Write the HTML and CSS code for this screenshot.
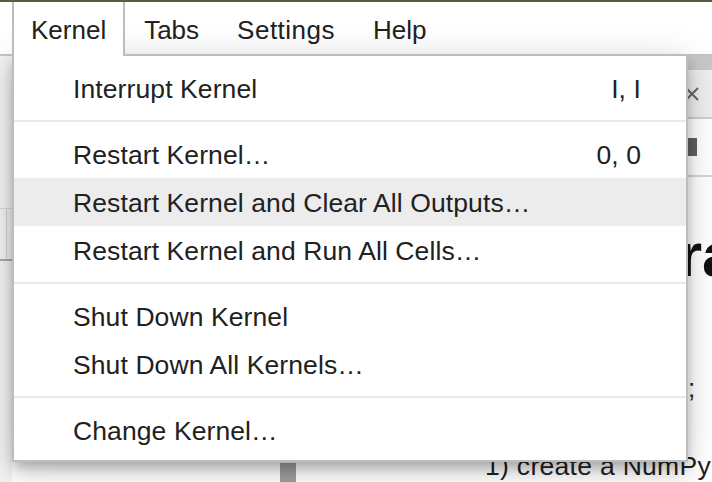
FILE: index.html
```html
<!DOCTYPE html>
<html lang="en">
<head>
<meta charset="utf-8">
<title>Kernel menu</title>
<link rel="stylesheet" href="styles.css">
</head>
<body>
<div class="app">
  <div class="topbar"></div>
  <nav class="menubar">
    <div class="mb-item active">Kernel</div>
    <div class="mb-item">Tabs</div>
    <div class="mb-item wide">Settings</div>
    <div class="mb-item">Help</div>
  </nav>
  <div class="workspace">
    <aside class="left-strip">
      <div class="left-box"><div class="left-box-col"></div></div>
    </aside>
    <main class="main">
      <div class="dock-bar"></div>
      <div class="doc-tab">
        <svg class="close" width="16" height="16" viewBox="0 0 16 16"><path d="M2 2 L14 14 M14 2 L2 14" stroke="#666" stroke-width="2" fill="none"/></svg>
      </div>
      <div class="toolbar"><span class="stop"></span></div>
      <div class="notebook">
        <h1 class="title">Arrays</h1>
        <p class="lead">the following steps;</p>
        <div class="row">
          <span class="collapser"></span>
          <span class="step">1) create a NumPy</span>
        </div>
      </div>
    </main>
  </div>
</div>

<div class="menu">
  <div class="mi"><span>Interrupt Kernel</span><span class="key">I, I</span></div>
  <div class="sep"></div>
  <div class="mi"><span>Restart Kernel…</span><span class="key">0, 0</span></div>
  <div class="mi hover"><span>Restart Kernel and Clear All Outputs…</span></div>
  <div class="mi"><span>Restart Kernel and Run All Cells…</span></div>
  <div class="sep"></div>
  <div class="mi"><span>Shut Down Kernel</span></div>
  <div class="mi"><span>Shut Down All Kernels…</span></div>
  <div class="sep"></div>
  <div class="mi"><span>Change Kernel…</span></div>
</div>
</body>
</html>
```

FILE: styles.css
```css
html, body {
  margin: 0;
  padding: 0;
}
body {
  width: 712px;
  height: 482px;
  overflow: hidden;
  position: relative;
  background: #fff;
  font-family: "Liberation Sans", Arial, sans-serif;
  color: #212121;
}
.app {
  height: 482px;
  display: flex;
  flex-direction: column;
}
.topbar {
  height: 2px;
  background: #5a5c42;
  flex: none;
}
.menubar {
  flex: none;
  display: flex;
  align-items: flex-start;
  height: 52px;
  padding-left: 12px;
  border-bottom: 2px solid #c4c4c4;
  background: #fff;
}
.mb-item {
  box-sizing: border-box;
  height: 52px;
  padding: 5px 17px 0;
  line-height: 47px;
  font-size: 26px;
  border-left: 2px solid transparent;
  border-right: 2px solid transparent;
  white-space: nowrap;
}
.mb-item.wide {
  letter-spacing: 0.5px;
}
.mb-item.active {
  height: 54px;
  background: #fff;
  border-left-color: #bdbdbd;
  border-right-color: #bdbdbd;
  position: relative;
  z-index: 6;
}
.workspace {
  flex: 1;
  display: flex;
  min-height: 0;
}
.left-strip {
  width: 12px;
  flex: none;
  background: #f2f2f2;
}
.left-box {
  margin-top: 152px;
  height: 50px;
  border-top: 1px solid #d9d9d9;
  border-bottom: 2px solid #ababab;
}
.left-box-col {
  width: 6px;
  height: 100%;
  border-right: 1px solid #cfcfcf;
}
.main {
  flex: 1;
  display: flex;
  flex-direction: column;
  overflow: hidden;
  min-width: 0;
}
.dock-bar {
  flex: none;
  height: 14px;
  background: #c8c8c8;
}
.doc-tab {
  flex: none;
  height: 47px;
  background: #eeeeee;
  border-bottom: 2px solid #cfcfcf;
  display: flex;
  justify-content: flex-end;
  align-items: center;
  padding-right: 12px;
}
.close {
  display: block;
}
.toolbar {
  flex: none;
  height: 56px;
  background: #fff;
  border-bottom: 2px solid #d4d4d4;
  display: flex;
  justify-content: flex-end;
  align-items: center;
  padding-right: 15px;
}
.stop {
  width: 18px;
  height: 18px;
  background: #616161;
}
.notebook {
  flex: 1;
  background: #fff;
  padding-top: 41px;
  white-space: nowrap;
}
.title {
  margin: 0 0 0 597px;
  font-size: 62px;
  line-height: 74px;
  font-weight: 700;
  color: #111;
}
.lead {
  margin: 78px 0 0 462px;
  font-size: 26px;
  line-height: 36px;
  color: #222;
}
.row {
  display: flex;
  align-items: flex-start;
  margin-top: 42px;
}
.collapser {
  flex: none;
  margin-left: 268px;
  margin-top: 15px;
  width: 16px;
  height: 40px;
  background: #9e9e9e;
}
.step {
  margin-left: 189px;
  font-size: 26.5px;
  letter-spacing: 0.3px;
  line-height: 36px;
  color: #222;
}

.menu {
  position: absolute;
  top: 54px;
  left: 12px;
  width: 676px;
  box-sizing: border-box;
  border: 2px solid #bdbdbd;
  background: #fff;
  padding: 8px 0 6px;
  z-index: 5;
  box-shadow: 0 6px 10px -2px rgba(0,0,0,0.2),
              0 12px 20px 0 rgba(0,0,0,0.14),
              0 2px 36px 0 rgba(0,0,0,0.12);
}
.mi {
  display: flex;
  justify-content: space-between;
  height: 48px;
  line-height: 50px;
  padding: 0 45px 0 59px;
  font-size: 26.5px;
  letter-spacing: 0.1px;
  color: #212121;
  white-space: nowrap;
}
.mi.hover {
  background: #ececec;
}
.sep {
  height: 2px;
  background: #e8e8e8;
  margin: 8px 0;
}
```
